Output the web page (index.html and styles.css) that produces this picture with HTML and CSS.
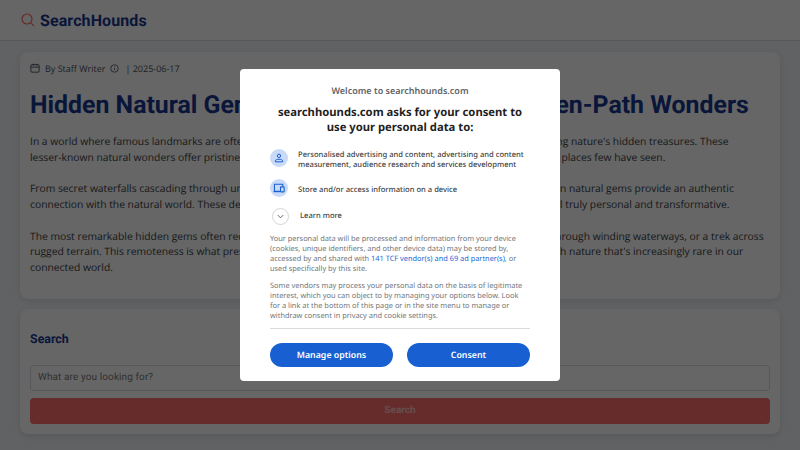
FILE: index.html

```html
<!DOCTYPE html>
<html lang="en">
<head>
    <meta charset="UTF-8">
    <meta name="viewport" content="width=device-width, initial-scale=1.0">
    <title>SearchHounds</title>
    <link rel="stylesheet" href="styles.css">
</head>
<body>
    <header class="site-header">
        <svg class="logo-icon" width="14" height="14" viewBox="0 0 14 14" fill="none" stroke="#fe6a5f" stroke-width="1.2">
            <circle cx="6" cy="6" r="5"/>
            <path d="M9.6 9.6l3.6 3.6"/>
        </svg>
        <span class="logo-text">SearchHounds</span>
    </header>

    <main class="content">
        <article class="card article">
            <div class="meta">
                <svg width="10" height="10" viewBox="0 0 12 12" fill="none" stroke="#374151" stroke-width="1">
                    <rect x="1" y="2" width="10" height="9" rx="1.2"/>
                    <path d="M1 5h10M4 .8v2.4M8 .8v2.4"/>
                </svg>
                <span class="meta-author">By Staff Writer</span>
                <svg width="9" height="9" viewBox="0 0 12 12" fill="none" stroke="#374151" stroke-width="1">
                    <circle cx="6" cy="6" r="5"/>
                    <path d="M6 5.5v3M6 3.2v1"/>
                </svg>
                <span class="meta-date">| 2025-06-17</span>
            </div>
            <h1>Hidden Natural Gems: Uncovering Off-the-Beaten-Path Wonders</h1>
            <p>In a world where famous landmarks are often overcrowded with tourists, there's a wondrous thrill in discovering nature's hidden treasures. These<br>lesser-known natural wonders offer pristine beauty, peaceful solitude, and a rare unique chance to experience places few have seen.</p>
            <p>From secret waterfalls cascading through untouched forests to secluded valleys full of wildflowers, these hidden natural gems provide an authentic<br>connection with the natural world. These destinations reward the curious travelers with rare moments that feel truly personal and transformative.</p>
            <p>The most remarkable hidden gems often require extra hours and good planning to reach, whether it's a hike through winding waterways, or a trek across<br>rugged terrain. This remoteness is what preserves their beauty and gives adventurous visitors a connection with nature that's increasingly rare in our<br>connected world.</p>
        </article>

        <section class="card search">
            <h2>Search</h2>
            <input class="search-input" type="text" placeholder="What are you looking for?">
            <button class="search-btn">Search</button>
        </section>
    </main>

    <div class="overlay">
        <div class="consent">
            <div class="welcome">Welcome to searchhounds.com</div>
            <h3>searchhounds.com asks for your consent to use your personal data to:</h3>

            <div class="purpose">
                <span class="purpose-icon">
                    <svg width="10" height="10" viewBox="0 0 12 12" fill="none" stroke="#1a5fd0" stroke-width="1.2">
                        <circle cx="6" cy="3.4" r="2"/>
                        <path d="M1.6 10.6V9.4c0-1 1.6-1.9 4.4-1.9s4.4.9 4.4 1.9v1.2z"/>
                    </svg>
                </span>
                <span class="purpose-text">Personalised advertising and content, advertising and content measurement, audience research and services development</span>
            </div>
            <div class="purpose">
                <span class="purpose-icon">
                    <svg width="12" height="10" viewBox="0 0 14 12" fill="none" stroke="#1a5fd0" stroke-width="1.3">
                        <path d="M8 10H1.5V1.5h10V4"/>
                        <rect x="8.8" y="4.6" width="4.4" height="6" rx=".6"/>
                        <path d="M.5 10.4h7.5"/>
                    </svg>
                </span>
                <span class="purpose-text">Store and/or access information on a device</span>
            </div>
            <div class="learn">
                <span class="learn-toggle">
                    <svg width="7" height="5" viewBox="0 0 8 5" fill="none" stroke="#555" stroke-width="1">
                        <path d="M.8 .8L4 4l3.2-3.2"/>
                    </svg>
                </span>
                <span>Learn more</span>
            </div>

            <p class="note">Your personal data will be processed and information from your device (cookies, unique identifiers, and other device data) may be stored by, accessed by and shared with <a href="#">141 TCF vendor(s) and 69 ad partner(s)</a>, or used specifically by this site.</p>
            <p class="note">Some vendors may process your personal data on the basis of legitimate interest, which you can object to by managing your options below. Look for a link at the bottom of this page or in the site menu to manage or withdraw consent in privacy and cookie settings.</p>

            <div class="actions">
                <button class="consent-btn">Manage options</button>
                <button class="consent-btn">Consent</button>
            </div>
        </div>
    </div>
</body>
</html>
```

FILE: styles.css

```css
* {
    margin: 0;
    padding: 0;
    box-sizing: border-box;
    text-rendering: geometricPrecision;
}

html, body {
    width: 800px;
    height: 450px;
    overflow: hidden;
}

body {
    background-color: #f0f4f8;
    font-family: "Open Sans", sans-serif;
    color: #3a3d42;
}

.site-header {
    height: 41px;
    display: flex;
    align-items: center;
    padding-left: 21px;
    background: white;
    border-bottom: 1px solid #d5d9e2;
}

.logo-icon {
    margin-right: 5px;
}

.logo-text {
    font-family: Roboto, sans-serif;
    font-weight: 700;
    font-size: 16px;
    letter-spacing: 0.1px;
    color: #17388f;
}

.content {
    padding: 11px 20px;
    display: flex;
    flex-direction: column;
    gap: 10px;
}

.card {
    background: white;
    border-radius: 8px;
    box-shadow: 0 2px 6px rgba(0, 0, 0, 0.1);
    padding: 10px;
}

.article {
    height: 247px;
}

.meta {
    display: flex;
    align-items: center;
    height: 12px;
    margin-bottom: 17px;
    font-size: 9px;
    color: #4b5563;
}

.meta-author {
    margin: 0 5px;
}

.meta-date {
    margin-left: 6px;
}

h1 {
    font-family: Roboto, sans-serif;
    font-weight: 700;
    font-size: 24.85px;
    line-height: 30px;
    white-space: nowrap;
    color: #17388f;
    margin-bottom: 14px;
}

.article p {
    font-size: 10.3px;
    line-height: 15.75px;
    margin-bottom: 15.75px;
}

.search {
    height: 125px;
    display: flex;
    flex-direction: column;
}

h2 {
    font-family: Roboto, sans-serif;
    font-weight: 700;
    font-size: 12.4px;
    line-height: 16px;
    color: #17388f;
    margin: 13px 0 17px;
}

.search-input {
    height: 26px;
    padding: 0 7px;
    border: 1px solid #d9dde3;
    border-radius: 3px;
    font-family: Roboto, sans-serif;
    font-size: 10px;
    letter-spacing: 0.1px;
    margin-bottom: 7px;
}

.search-input::placeholder {
    color: #7a7a7a;
}

.search-btn {
    height: 27px;
    border: none;
    border-radius: 4px;
    background: #ff6e6e;
    color: rgba(255, 255, 255, 0.6);
    font-family: Roboto, sans-serif;
    font-weight: 700;
    font-size: 10px;
}

/* dimmed layer and consent box sit over the page */
.overlay {
    position: fixed;
    top: 0;
    left: 0;
    width: 100%;
    height: 100%;
    background: rgba(0, 0, 0, 0.6);
}

.consent {
    position: absolute;
    left: 240px;
    top: 69px;
    width: 320px;
    height: 312px;
    padding: 15px 30px 0;
    background: white;
    border-radius: 4px;
    font-family: "Noto Sans", sans-serif;
}

.welcome {
    text-align: center;
    font-size: 9px;
    line-height: 14px;
    font-weight: 600;
    color: #5f6368;
    margin-bottom: 7px;
}

h3 {
    text-align: center;
    font-size: 11.25px;
    line-height: 15px;
    font-weight: 700;
    color: #1f1f1f;
    margin-bottom: 11px;
}

.purpose {
    display: flex;
    align-items: center;
    gap: 10px;
    font-size: 7.6px;
    line-height: 10px;
    font-weight: 500;
    color: #444;
    min-height: 18px;
    margin-bottom: 9px;
}

.purpose-text {
    padding-top: 4px;
}

.purpose-icon {
    flex: none;
    width: 18px;
    height: 18px;
    border-radius: 50%;
    background: #c8daf7;
    display: flex;
    align-items: center;
    justify-content: center;
}

.learn {
    display: flex;
    align-items: center;
    gap: 11px;
    font-size: 7.6px;
    font-weight: 500;
    color: #444;
    margin: 10.5px 0 9px 2px;
}

.learn-toggle {
    width: 17px;
    height: 17px;
    border: 1px solid #d5d5d5;
    border-radius: 50%;
    display: flex;
    align-items: center;
    justify-content: center;
}

.note {
    font-size: 7.4px;
    line-height: 10px;
    color: #70757a;
    margin-bottom: 7.5px;
}

.note a {
    color: #1a66d6;
    text-decoration: none;
}

.actions {
    display: flex;
    justify-content: space-between;
    border-top: 1px solid #dcdcdc;
    margin-top: -0.5px;
    padding-top: 14px;
}

.consent-btn {
    width: 123px;
    height: 24px;
    border: none;
    border-radius: 12px;
    background: #1860d2;
    color: white;
    font-family: "Noto Sans", sans-serif;
    font-weight: 600;
    font-size: 8.8px;
}
```
